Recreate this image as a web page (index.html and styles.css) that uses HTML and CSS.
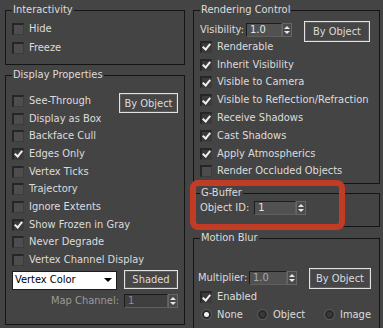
FILE: index.html
```html
<!DOCTYPE html>
<html lang="en">

<head>
    <meta charset="UTF-8">
    <meta name="viewport" content="width=device-width, initial-scale=1.0">
    <title>Object Properties</title>
    <link rel="stylesheet" href="styles.css">
</head>

<body>
    <div class="panel">
        <div class="col col-left">
            <fieldset class="group interactivity">
                <legend>Interactivity</legend>
                <div class="check tall"><span class="cb"></span>Hide</div>
                <div class="check tall"><span class="cb"></span>Freeze</div>
            </fieldset>

            <fieldset class="group display">
                <legend>Display Properties</legend>
                <div class="display-top">
                    <div class="check-list">
                        <div class="check"><span class="cb"></span>See-Through</div>
                        <div class="check"><span class="cb"></span>Display as Box</div>
                        <div class="check"><span class="cb"></span>Backface Cull</div>
                        <div class="check"><span class="cb on"></span>Edges Only</div>
                        <div class="check"><span class="cb"></span>Vertex Ticks</div>
                        <div class="check"><span class="cb"></span>Trajectory</div>
                        <div class="check"><span class="cb"></span>Ignore Extents</div>
                        <div class="check"><span class="cb on"></span>Show Frozen in Gray</div>
                        <div class="check"><span class="cb"></span>Never Degrade</div>
                        <div class="check"><span class="cb"></span>Vertex Channel Display</div>
                    </div>
                    <button class="btn btn-display">By Object</button>
                </div>
                <div class="mode-row">
                    <div class="dropdown"><span>Vertex Color</span><span class="caret"></span></div>
                    <button class="btn btn-shaded">Shaded</button>
                </div>
                <div class="map-row">
                    <span class="dim">Map Channel:</span>
                    <span class="spinner">
                        <span class="field field-map dim">1</span>
                        <span class="arrows"></span>
                    </span>
                </div>
            </fieldset>
        </div>

        <div class="col col-right">
            <fieldset class="group rendering">
                <legend>Rendering Control</legend>
                <div class="vis-row">
                    <span class="label">Visibility:</span>
                    <span class="spinner">
                        <span class="field field-vis">1.0</span>
                        <span class="arrows"></span>
                    </span>
                    <button class="btn btn-vis">By Object</button>
                </div>
                <div class="check-list right">
                    <div class="check"><span class="cb on"></span>Renderable</div>
                    <div class="check"><span class="cb on"></span>Inherit Visibility</div>
                    <div class="check"><span class="cb on"></span>Visible to Camera</div>
                    <div class="check"><span class="cb on"></span>Visible to Reflection/Refraction</div>
                    <div class="check"><span class="cb on"></span>Receive Shadows</div>
                    <div class="check"><span class="cb on"></span>Cast Shadows</div>
                    <div class="check"><span class="cb on"></span>Apply Atmospherics</div>
                    <div class="check"><span class="cb"></span>Render Occluded Objects</div>
                </div>
            </fieldset>

            <div class="gbuffer-wrap">
                <fieldset class="group gbuffer">
                    <legend>G-Buffer</legend>
                    <div class="id-row">
                        <span class="label">Object ID:</span>
                        <span class="spinner">
                            <span class="field field-id">1</span>
                            <span class="arrows"></span>
                        </span>
                    </div>
                </fieldset>
                <div class="highlight"></div>
            </div>

            <fieldset class="group motion">
                <legend>Motion Blur</legend>
                <div class="mult-row">
                    <span class="label">Multiplier:</span>
                    <span class="spinner">
                        <span class="field field-mult">1.0</span>
                        <span class="arrows"></span>
                    </span>
                    <button class="btn btn-mult">By Object</button>
                </div>
                <div class="check enabled"><span class="cb on"></span>Enabled</div>
                <div class="radio-row">
                    <div class="radio-item"><span class="rb on"></span>None</div>
                    <div class="radio-item"><span class="rb"></span>Object</div>
                    <div class="radio-item"><span class="rb"></span>Image</div>
                </div>
            </fieldset>
        </div>
    </div>
</body>

</html>
```

FILE: styles.css
```css
body {
    margin: 0;
    padding: 0;
    background-color: #444444;
    color: #dcdcdc;
    font-family: "DejaVu Sans Condensed", "DejaVu Sans", sans-serif;
    font-stretch: condensed;
    font-size: 11px;
    line-height: 14px;
    overflow: hidden;
}

.panel {
    display: flex;
    gap: 8px;
    padding: 3px 0 0 5px;
}

.col {
    display: flex;
    flex-direction: column;
    min-width: 0;
    flex-shrink: 0;
}

.col-left {
    width: 180px;
}

.col-right {
    width: 187px;
}

/* group boxes */
.group {
    margin: 0;
    padding: 0 6px;
    border: 1px solid #151515;
    min-width: 0;
}

.group legend {
    padding: 0 1px;
    line-height: 14px;
}

.interactivity {
    padding-top: 2px;
    padding-bottom: 7px;
}

.display {
    margin-top: 3px;
    padding-top: 10px;
    padding-bottom: 16px;
}

.rendering {
    padding-top: 4px;
    padding-bottom: 3px;
}

.gbuffer-wrap {
    position: relative;
    margin-top: 2px;
}

.gbuffer {
    padding-bottom: 10px;
}

.motion {
    margin-top: 4px;
    padding-top: 23px;
    padding-bottom: 30px;
}

/* checkboxes */
.check {
    display: flex;
    align-items: center;
    gap: 5px;
    height: 17.7px;
    white-space: nowrap;
}

.check.tall {
    height: 19px;
}

.check-list {
    flex: 1;
    min-width: 0;
}

.check-list.right .check {
    height: 17.8px;
}

.cb {
    display: flex;
    align-items: center;
    justify-content: center;
    width: 12px;
    height: 12px;
    box-sizing: border-box;
    background-color: #4d4d4d;
    border-top: 2px solid #262626;
    border-left: 2px solid #262626;
    border-right: 1px solid #3c3c3c;
    border-bottom: 1px solid #3c3c3c;
    flex-shrink: 0;
}

.cb.on {
    background-color: #3a3a3a;
}

.cb.on::after {
    content: "";
    width: 3px;
    height: 6px;
    margin-top: -2px;
    border-right: 2px solid #f0f0f0;
    border-bottom: 2px solid #f0f0f0;
    transform: rotate(40deg);
}

/* buttons */
.btn {
    font-family: inherit;
    font-stretch: inherit;
    font-size: 11px;
    color: #dcdcdc;
    background-color: #464646;
    border: 1px solid #e2e2e2;
    box-shadow: inset 0 0 0 1px #5c5c5c;
    padding: 0;
    margin: 0;
    flex-shrink: 0;
}

.display-top {
    display: flex;
    align-items: flex-start;
}

.btn-display {
    width: 59px;
    height: 20px;
    margin-top: 1px;
}

.mode-row {
    display: flex;
    justify-content: space-between;
    margin-top: 1px;
    height: 20px;
}

.dropdown {
    display: flex;
    align-items: center;
    justify-content: space-between;
    width: 105px;
    height: 19px;
    margin-top: 1px;
    box-sizing: border-box;
    padding: 0 4px 0 2px;
    background-color: #ffffff;
    border: 1px solid #1c1c1c;
    color: #000000;
}

.caret {
    width: 0;
    height: 0;
    border-left: 4px solid transparent;
    border-right: 4px solid transparent;
    border-top: 4px solid #000000;
}

.btn-shaded {
    width: 54px;
    height: 19px;
}

.map-row {
    display: flex;
    justify-content: flex-end;
    align-items: center;
    gap: 5px;
    margin-top: 4px;
    height: 14px;
}

.dim {
    color: #9a9a9a;
}

/* spinners */
.spinner {
    display: flex;
    align-items: stretch;
    height: 14px;
}

.field {
    box-sizing: border-box;
    height: 14px;
    padding: 0 3px;
    line-height: 12px;
    background-color: #515151;
    border-top: 1px solid #1c1c1c;
    border-left: 1px solid #1c1c1c;
    border-bottom: 1px solid #5f5f5f;
    border-right: 1px solid #5f5f5f;
    color: #e4e4e4;
}

.field-map {
    width: 44px;
    background-color: #3f3f3f;
    color: #8e8e8e;
}

.field-vis {
    width: 36px;
}

.field-id {
    width: 42px;
}

.field-mult {
    width: 38px;
    color: #a8a8a8;
}

.arrows {
    display: flex;
    flex-direction: column;
    align-items: center;
    justify-content: center;
    gap: 2px;
    width: 10px;
    box-sizing: border-box;
    border: 1px solid #666666;
    background-color: #4a4a4a;
}

.arrows::before,
.arrows::after {
    content: "";
    width: 0;
    height: 0;
    border-left: 3px solid transparent;
    border-right: 3px solid transparent;
}

.arrows::before {
    border-bottom: 3px solid #e8e8e8;
}

.arrows::after {
    border-top: 3px solid #e8e8e8;
}

/* rendering control */
.vis-row {
    display: flex;
    align-items: flex-start;
    height: 17px;
}

.vis-row .label {
    margin-top: 2px;
    width: 46px;
}

.vis-row .spinner {
    margin-top: 2px;
}

.btn-vis {
    width: 66px;
    height: 21px;
    margin-left: auto;
    margin-right: 3px;
}

/* g-buffer */
.id-row {
    display: flex;
    align-items: center;
    gap: 5px;
    height: 16px;
}

.highlight {
    position: absolute;
    left: -3px;
    top: -6px;
    width: 155px;
    height: 50px;
    box-sizing: border-box;
    border: 6px solid #c23b25;
    border-radius: 8px;
}

/* motion blur */
.mult-row {
    display: flex;
    align-items: flex-start;
    height: 20px;
}

.mult-row .label {
    margin-top: 3px;
    margin-left: -2px;
    width: 51px;
}

.mult-row .spinner {
    margin-top: 3px;
}

.btn-mult {
    width: 62px;
    height: 21px;
    margin-left: auto;
    margin-right: 2px;
}

.enabled {
    height: 18px;
}

.radio-row {
    display: grid;
    grid-template-columns: 56px 67px auto;
    height: 17px;
    padding-left: 2px;
}

.radio-item {
    display: flex;
    align-items: center;
    gap: 6px;
}

.rb {
    width: 9px;
    height: 9px;
    box-sizing: border-box;
    border-radius: 50%;
    background-color: #3a3a3a;
    border: 2px solid #2a2a2a;
    box-shadow: 0 0 0 1px #5a5a5a;
}

.rb.on {
    background-color: #f2f2f2;
    border-color: #2a2a2a;
}
```
